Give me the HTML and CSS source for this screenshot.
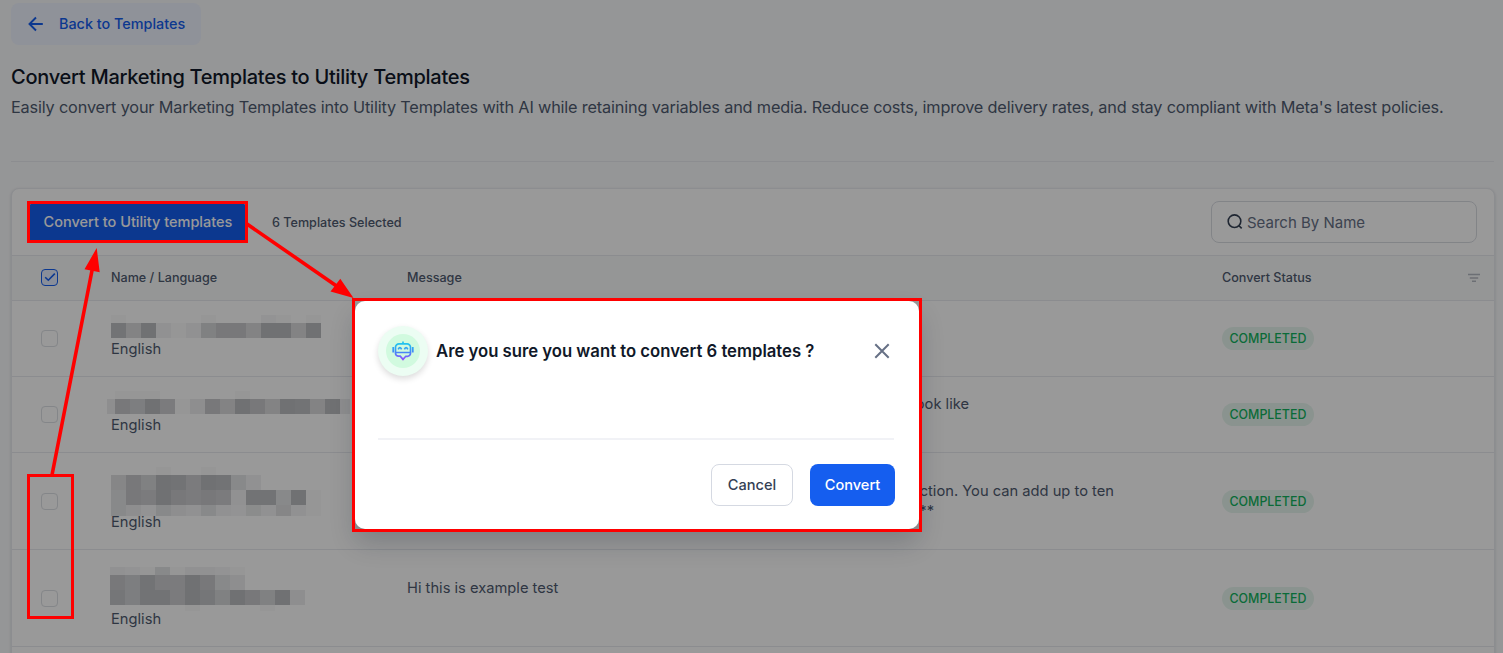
FILE: index.html
```html
<!DOCTYPE html>
<html lang="en">
<head>
    <meta charset="UTF-8">
    <meta name="viewport" content="width=device-width, initial-scale=1.0">
    <title>Convert Marketing Templates</title>
    <link rel="stylesheet" href="styles.css">
</head>
<body>
    <main class="page">
        <button class="back">
            <svg width="16" height="16" viewBox="0 0 16 16"><path d="M14.8 8H2M8 1.5L1.5 8L8 14.5"/></svg>
            <span>Back to Templates</span>
        </button>
        <h1>Convert Marketing Templates to Utility Templates</h1>
        <p class="subtitle">Easily convert your Marketing Templates into Utility Templates with AI while retaining variables and media. Reduce costs, improve delivery rates, and stay compliant with Meta's latest policies.</p>

        <section class="card">
            <div class="toolbar">
                <button class="convert">Convert to Utility templates</button>
                <span class="selected">6 Templates Selected</span>
                <div class="search">
                    <svg width="16" height="16" viewBox="0 0 16 16"><circle cx="7.5" cy="7.2" r="6.3"/><path d="M12 11.7l2.7 2.7"/></svg>
                    <span>Search By Name</span>
                </div>
            </div>
            <div class="row head">
                <span class="check checked"><svg width="12" height="10" viewBox="0 0 12 10"><path d="M1.2 5.2L4.3 8.2L10.8 1.6"/></svg></span>
                <span>Name / Language</span>
                <span>Message</span>
                <span class="status">Convert Status</span>
                <svg class="filter" width="12" height="10" viewBox="0 0 12 10"><path d="M0 1.5h12M1.8 5h8.4M4 8.3h4"/></svg>
            </div>
            <div class="row">
                <span class="check"></span>
                <div class="name"><div class="mask" data-rows="8:10000010002101 15:e8f3139cc8ff8f"></div>English</div>
                <div class="message"></div>
                <div class="status"><span class="badge">COMPLETED</span></div>
            </div>
            <div class="row">
                <span class="check"></span>
                <div class="name"><div class="mask wide" data-rows="8:0111000001 15:4cafb14c8fc8fe8f4"></div>English</div>
                <div class="message"><div class="ending look">look like</div></div>
                <div class="status"><span class="badge">COMPLETED</span></div>
            </div>
            <div class="row tall">
                <span class="check"></span>
                <div class="name"><div class="mask three" data-rows="8:0001001 15:7c9febfe63 15:6cbfcbcb3ee6f1 11:64264363253731"></div>English</div>
                <div class="message"><div class="ending action">action. You can add up to ten</div><div class="ending stars">**</div></div>
                <div class="status"><span class="badge">COMPLETED</span></div>
            </div>
            <div class="row tall">
                <span class="check"></span>
                <div class="name"><div class="mask four" data-rows="8:321613321 15:caebbfc64 15:daeebfd9fc9f4 6:00000100001"></div>English</div>
                <div class="message">Hi this is example test</div>
                <div class="status"><span class="badge">COMPLETED</span></div>
            </div>
            <div class="row"></div>
        </section>
    </main>

    <div class="overlay">
        <div class="modal">
            <div class="modal-head">
                <div class="bot">
                    <div class="bot-inner">
                        <svg width="22" height="20" viewBox="0 0 22 20">
                            <defs>
                                <linearGradient id="botColor" gradientUnits="userSpaceOnUse" x1="11" y1="0" x2="11" y2="20">
                                    <stop offset="0.15" stop-color="#23c3ee"/>
                                    <stop offset="0.55" stop-color="#4388f7"/>
                                    <stop offset="1" stop-color="#a044ff"/>
                                </linearGradient>
                            </defs>
                            <path d="M11 .6V2.6M1.2 6v5.5M20.8 6v5.5M7 2.8h8a3.5 3.5 0 0 1 3.5 3.5v6a3 3 0 0 1-3 3h-1.7L11 18.4L8.2 15.2H6.5a3 3 0 0 1-3-3V6.3a3.5 3.5 0 0 1 3.5-3.5zM3.5 11.5h15M6.2 8.4q1.7-3.4 3.4 0M12.4 8.4q1.7-3.4 3.4 0"/>
                        </svg>
                    </div>
                </div>
                <h2>Are you sure you want to convert 6 templates ?</h2>
                <svg class="close" width="16" height="16" viewBox="0 0 16 16"><path d="M1.3 1.3l13.4 13.4M14.7 1.3l-13.4 13.4"/></svg>
            </div>
            <div class="modal-foot">
                <button class="cancel">Cancel</button>
                <button class="confirm">Convert</button>
            </div>
        </div>
    </div>

    <!-- walkthrough marks -->
    <svg class="marks" width="1503" height="653" viewBox="0 0 1503 653">
        <rect x="28.5" y="202.5" width="218" height="39"/>
        <rect x="28.5" y="475.5" width="44" height="142"/>
        <rect x="353.5" y="299.5" width="567" height="231"/>
        <path class="line" d="M52 475L92.5 268M247 224L338 287"/>
        <path class="tip" d="M96.7 248L84.5 269.3L99.7 272.2zM353.5 298L340.3 278.7L330.5 291.5z"/>
    </svg>

    <script>
        // build the blurred-out names: each row is "height:shades"
        document.querySelectorAll(".mask").forEach(function (mask) {
            mask.dataset.rows.split(" ").forEach(function (row) {
                const parts = row.split(":");
                const line = document.createElement("div");
                line.className = "mask-line";
                line.style.height = parts[0] + "px";
                for (const shade of parts[1]) {
                    const cell = document.createElement("i");
                    cell.style.backgroundColor = "rgba(42, 46, 58, " + parseInt(shade, 16) * 0.0215 + ")";
                    line.appendChild(cell);
                }
                mask.appendChild(line);
            });
        });
    </script>
</body>
</html>
```
FILE: styles.css
```css
* {
    box-sizing: border-box;
}

body {
    margin: 0;
    height: 653px;
    overflow: hidden;
    font-family: Inter, sans-serif;
    background-color: #f9fafc;
    color: #4f5b70;
}

svg {
    fill: none;
    stroke: currentColor;
    stroke-width: 1.6;
    flex: none;
}

h1, h2, p {
    margin: 0;
}

button {
    font-family: inherit;
    border: 0;
    padding: 0;
}

.page {
    padding: 3px 9px 0 11px;
}

.back {
    display: flex;
    align-items: center;
    gap: 15px;
    width: 190px;
    height: 42px;
    padding-left: 17px;
    border-radius: 8px;
    background-color: #eef3ff;
    color: #155eef;
    font-size: 14.4px;
    font-weight: 500;
}

.back span {
    margin-bottom: 2px;
}

.back svg {
    stroke-width: 1.9;
}

h1 {
    margin-top: 18px;
    color: #101828;
    font-size: 20px;
    font-weight: 500;
    letter-spacing: -0.26px;
    line-height: 28px;
}

.subtitle {
    height: 71px;
    padding-top: 4px;
    border-bottom: 1px solid #eaecf0;
    font-size: 16.3px;
    letter-spacing: -0.175px;
    line-height: 25px;
    white-space: nowrap;
}

.card {
    width: 1484px;
    height: 480px;
    margin-top: 26px;
    border: 1px solid #eaecf0;
    border-radius: 8px;
    background-color: #fff;
    box-shadow: 0 1px 3px rgba(16, 24, 40, 0.15);
    overflow: hidden;
}

.toolbar {
    display: flex;
    align-items: center;
    height: 66px;
    padding: 0 17px 0 16px;
}

.convert {
    width: 219px;
    height: 39px;
    padding: 0 0 1px 1px;
    border-radius: 6px;
    background-color: #155eef;
    color: #fff;
    font-size: 14.5px;
    font-weight: 500;
}

.selected {
    margin-left: 25px;
    font-size: 12.6px;
    font-weight: 500;
}

.search {
    display: flex;
    align-items: center;
    gap: 4px;
    width: 266px;
    height: 42px;
    margin-left: auto;
    padding-left: 15px;
    border: 1px solid #d9dce2;
    border-radius: 8px;
    color: #667085;
    font-size: 15px;
}

.search svg {
    color: #344054;
}

.row {
    display: grid;
    grid-template-columns: 99px 296px 815px 1fr;
    align-items: center;
    height: 76px;
    border-top: 1px solid #e8eaee;
    font-size: 14.7px;
    line-height: 20px;
}

.row.tall {
    height: 97px;
}

.row.head {
    grid-template-columns: 99px 296px 815px 1fr 26px;
    height: 45px;
    background-color: #f9fafb;
    font-size: 12.6px;
    font-weight: 500;
}

.filter {
    color: #b5b9c1;
    stroke-width: 1.4;
}

.check {
    width: 17px;
    height: 17px;
    margin-left: 29px;
    border: 1px solid #dcdfe4;
    border-radius: 4px;
}

.check.checked {
    display: flex;
    align-items: center;
    justify-content: center;
    margin-bottom: 2px;
    border-color: #155eef;
    background-color: #e4edff;
    color: #155eef;
}

.mask {
    margin-top: -3px;
    height: 24px;
}

.mask.wide {
    margin-left: -4px;
}

.mask.three {
    height: 45px;
}

.mask.four {
    margin-top: -1px;
    margin-left: -1px;
    height: 42px;
}

.mask-line {
    display: flex;
}

.mask-line i {
    width: 15px;
}

.mask.wide i:first-child {
    width: 8px;
}

.mask.wide i:nth-child(17) {
    width: 10px;
}

.message {
    height: 41px;
}

.ending {
    text-align: right;
}

.look {
    width: 562px;
}

.action {
    width: 707px;
}

.stars {
    width: 527px;
}

.badge {
    display: inline-block;
    height: 23px;
    padding: 0 7.5px;
    border-radius: 12px;
    background-color: #e7f6ee;
    color: #12b35e;
    font-size: 12.4px;
    font-weight: 500;
    line-height: 23px;
}

.overlay {
    position: absolute;
    inset: 0;
    padding: 301px 0 0 355px;
    background-color: rgba(0, 0, 0, 0.4);
}

.modal {
    width: 564px;
    height: 228px;
    padding: 25px 25px 0 23px;
    border-radius: 10px;
    background-color: #fff;
    box-shadow: 0 14px 26px rgba(16, 24, 40, 0.2);
}

.modal-head {
    display: flex;
    height: 114px;
    border-bottom: 2px solid #f1f2f6;
}

.bot {
    width: 50px;
    height: 50px;
    padding: 8px;
    border-radius: 50%;
    background-color: #ecfdf3;
    box-shadow: 0 3px 6px rgba(0, 0, 0, 0.14);
}

.bot-inner {
    display: flex;
    align-items: center;
    justify-content: center;
    width: 34px;
    height: 34px;
    border-radius: 50%;
    background-color: #d1fadf;
}

.bot-inner svg {
    stroke: url(#botColor);
    stroke-width: 1.7;
}

h2 {
    margin-left: 8px;
    color: #101828;
    font-size: 16.7px;
    font-weight: 600;
    line-height: 50px;
}

.close {
    margin: 17px 4px 0 auto;
    color: #667085;
    stroke-width: 2;
}

.modal-foot {
    display: flex;
    justify-content: flex-end;
    gap: 17px;
    margin-right: -1px;
    padding-top: 24px;
}

.modal-foot button {
    height: 42px;
    border-radius: 8px;
    font-size: 14.6px;
    font-weight: 500;
}

.modal-foot .cancel {
    width: 82px;
    border: 1px solid #d5d9e2;
    background-color: #fff;
    color: #344054;
}

.modal-foot .confirm {
    width: 85px;
    background-color: #155eef;
    color: #fff;
}

.marks {
    position: absolute;
    top: 0;
    left: 0;
    stroke: #f00;
    stroke-width: 3;
}

.line {
    stroke-width: 3.6;
}

.tip {
    fill: #f00;
    stroke: none;
}
```
